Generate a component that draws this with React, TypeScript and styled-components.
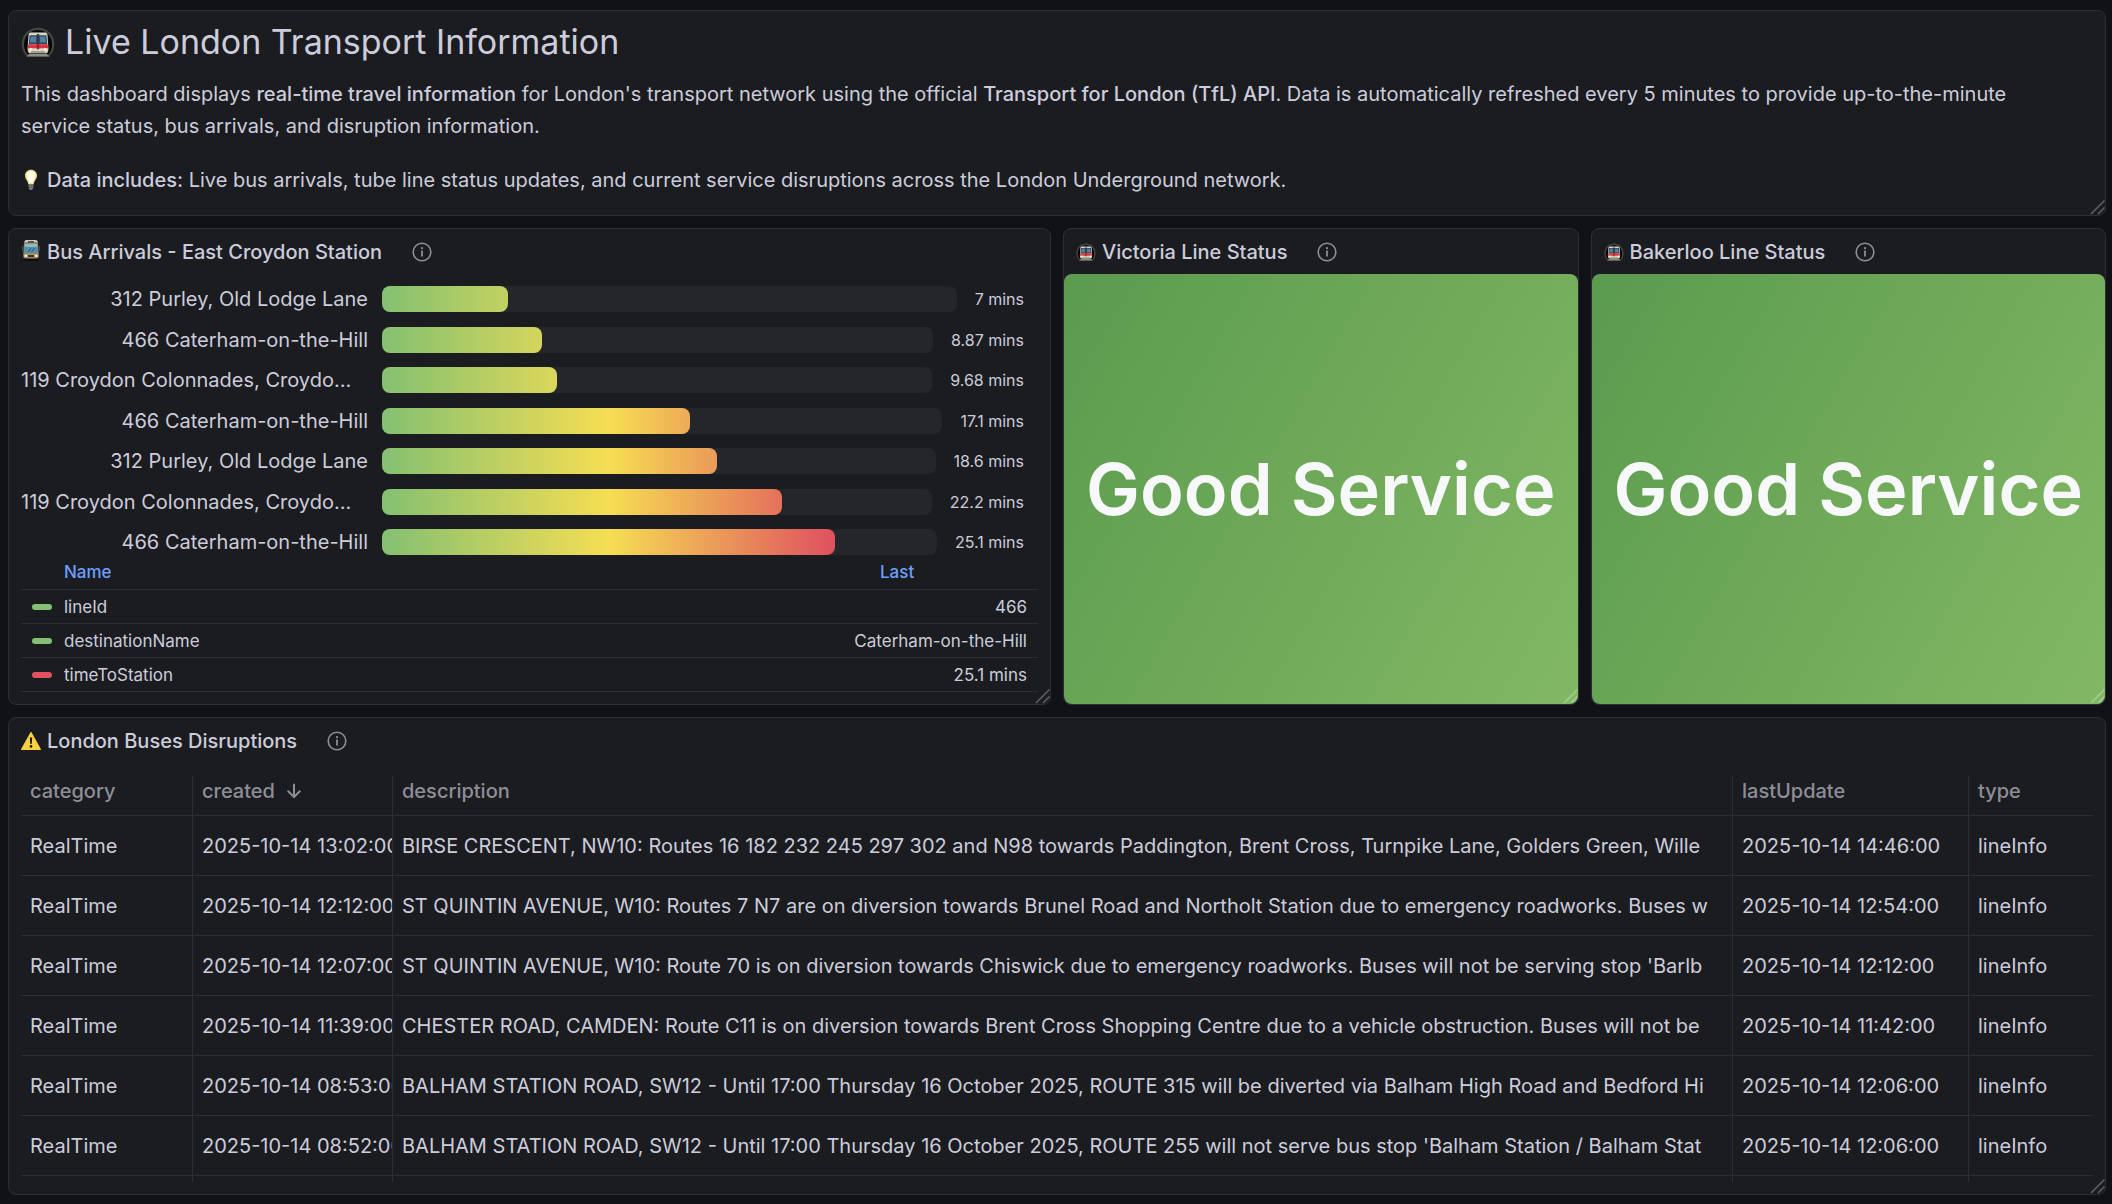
import React from "react";
import styled, { createGlobalStyle } from "styled-components";

const color = {
  canvas: "#111217",
  panel: "#1b1c20",
  line: "#2d2e33",
  track: "#25262b",
  text: "#ccccdc",
  muted: "#8e8e99",
  link: "#6e9fff",
  green: "#84c071",
  yellow: "#f5de53",
  red: "#e0525f",
};

const GlobalStyle = createGlobalStyle`
  *, *::before, *::after { box-sizing: border-box; }
  body {
    margin: 0;
    background: ${color.canvas};
    color: ${color.text};
    font-family: Inter, "Liberation Sans", sans-serif;
    font-size: 20px;
    line-height: 32px;
  }
`;

/* ---------- layout ---------- */

const Dashboard = styled.main`
  display: grid;
  grid-template-columns: repeat(4, minmax(0, 1fr));
  gap: 12px;
  padding: 10px 6px 9px 8px;
`;

const PanelFrame = styled.section<{ $span: number; $minHeight?: number }>`
  position: relative;
  display: flex;
  flex-direction: column;
  grid-column: span ${(p) => p.$span};
  min-height: ${(p) => (p.$minHeight ? `${p.$minHeight}px` : "0")};
  background: ${color.panel};
  border: 1px solid ${color.line};
  border-radius: 8px;
`;

const PanelHeader = styled.header`
  display: flex;
  align-items: center;
  gap: 6px;
  height: 45px;
  padding: 0 12px;
`;

const PanelTitle = styled.h2`
  margin: 0 24px 0 0;
  font-size: 20px;
  font-weight: 500;
  line-height: 32px;
  white-space: nowrap;
`;

const InfoButton = styled.button`
  display: flex;
  padding: 0;
  border: 0;
  background: none;
  color: ${color.muted};
  cursor: pointer;
`;

const Handle = styled.svg<{ $light?: boolean }>`
  position: absolute;
  right: 0;
  bottom: 0;
  color: ${(p) => (p.$light ? "rgba(220, 225, 215, 0.45)" : "#606167")};
`;

/* ---------- intro ---------- */

const Intro = styled.div`
  display: flex;
  flex-direction: column;
  padding: 11px 12px 19px;
`;

const IntroTitle = styled.h1`
  display: flex;
  align-items: center;
  gap: 10px;
  margin: 0 0 16px;
  font-size: 34px;
  font-weight: 400;
  line-height: 40px;
`;

const Paragraph = styled.p`
  margin: 0 0 22px;
  &:last-child { margin-bottom: 0; }
`;

const IconParagraph = styled(Paragraph)`
  display: flex;
  align-items: center;
  gap: 6px;
`;

const Strong = styled.strong`
  font-weight: 500;
`;

/* ---------- bar gauge ---------- */

const GaugeBody = styled.div`
  display: flex;
  flex: 1;
  flex-direction: column;
  padding: 12px;
`;

const Bars = styled.div`
  display: flex;
  flex: 1;
  flex-direction: column;
  justify-content: space-between;
`;

const BarRow = styled.div`
  display: grid;
  grid-template-columns: 347px minmax(0, 1fr);
  column-gap: 14px;
  align-items: center;
  height: 26px;
`;

const BarLabel = styled.span<{ $truncated: boolean }>`
  overflow: hidden;
  text-align: ${(p) => (p.$truncated ? "left" : "right")};
  white-space: nowrap;
  line-height: 26px;
`;

const BarArea = styled.div`
  display: grid;
  grid-template-columns: minmax(0, 1fr);
  > * { grid-area: 1 / 1; }
`;

const TrackLine = styled.div`
  display: flex;
  align-items: center;
  gap: 18px;
  padding-right: 14px;
`;

const Track = styled.div`
  flex: 1;
  height: 26px;
  border-radius: 8px;
  background: ${color.track};
`;

const BarValue = styled.span`
  font-size: 16px;
  line-height: 26px;
  white-space: nowrap;
`;

const Fill = styled.div`
  height: 26px;
  border-radius: 8px;
  background-image: linear-gradient(
    90deg,
    ${color.green} 0,
    ${color.yellow} 42%,
    ${color.red} 83%
  );
  background-repeat: no-repeat;
`;

const Legend = styled.table`
  width: 100%;
  border-collapse: collapse;
  font-size: 17px;
  line-height: 24px;
  th, td {
    height: 34px;
    padding: 0 11px;
    border-bottom: 1px solid ${color.line};
    font-weight: 400;
    text-align: left;
  }
  td:last-child { width: 202px; text-align: right; }
`;

const LegendHead = styled.th<{ $indent: number }>`
  && {
    padding-left: ${(p) => p.$indent}px;
    color: ${color.link};
    font-weight: 500;
  }
`;

const SeriesName = styled.span`
  display: flex;
  align-items: center;
  gap: 12px;
`;

const Swatch = styled.span<{ $color: string }>`
  width: 20px;
  height: 6px;
  border-radius: 3px;
  background: ${(p) => p.$color};
`;

/* ---------- status ---------- */

const StatusValue = styled.div`
  display: flex;
  flex: 1;
  align-items: center;
  justify-content: center;
  border-radius: 8px;
  background: linear-gradient(120deg, #5b9b4e, #82b864);
  color: #f7f8fa;
  font-size: 72px;
  font-weight: 600;
  line-height: 88px;
  white-space: nowrap;
`;

/* ---------- data table ---------- */

const TableBody = styled.div`
  padding: 13px 12px 12px;
`;

const DataTable = styled.table`
  width: 100%;
  table-layout: fixed;
  border-collapse: separate;
  border-spacing: 0;
`;

const Col = styled.col<{ $width?: number }>`
  width: ${(p) => (p.$width ? `${p.$width}px` : "auto")};
`;

const HeadCell = styled.th`
  height: 40px;
  padding: 0 0 0 9px;
  border-right: 1px solid ${color.line};
  border-bottom: 1px solid ${color.line};
  text-align: left;
  vertical-align: top;
  &:last-child { border-right: 0; }
`;

const SortButton = styled.button`
  display: flex;
  align-items: center;
  gap: 8px;
  padding: 0;
  border: 0;
  background: none;
  color: ${color.muted};
  font: inherit;
  font-weight: 500;
  line-height: 30px;
  cursor: pointer;
`;

const Cell = styled.td`
  height: 60px;
  padding: 0 0 0 9px;
  overflow: hidden;
  border-right: 1px solid ${color.line};
  border-bottom: 1px solid ${color.line};
  white-space: nowrap;
  &:last-child { border-right: 0; }
`;

const TailCell = styled(Cell)`
  height: 6px;
  border-bottom: 0;
`;

/* ---------- icons ---------- */

const InfoIcon = () => (
  <svg width="20" height="20" viewBox="0 0 20 20" fill="none" aria-hidden="true">
    <circle cx="10" cy="10" r="8.8" stroke="currentColor" strokeWidth="1.6" />
    <path d="M10 9.2v4.6" stroke="currentColor" strokeWidth="1.8" strokeLinecap="round" />
    <circle cx="10" cy="6.2" r="1.1" fill="currentColor" />
  </svg>
);

const SortDownIcon = () => (
  <svg width="22" height="22" viewBox="0 0 22 22" fill="none" aria-hidden="true">
    <path
      d="M11 4.600v12M5.200 11.200l5.800 5.800 5.800-5.800"
      stroke="currentColor"
      strokeWidth="2"
      strokeLinecap="round"
      strokeLinejoin="round"
    />
  </svg>
);

const ResizeHandle = ({ light }: { light?: boolean }) => (
  <Handle $light={light} width="15" height="15" viewBox="0 0 15 15" fill="none" aria-hidden="true">
    <path d="M1 14L14.500 .5M8 14l6.500-6.500" stroke="currentColor" strokeWidth="1.5" />
  </Handle>
);

const MetroIcon = ({ width }: { width: number }) => (
  <svg width={width} height={Math.round((width * 30) / 34)} viewBox="0 0 34 30" aria-hidden="true">
    <path d="M6 29.500C2.600 26.500.7 22 .7 16.800.7 7.800 8 .7 17 .7s16.300 7.100 16.300 16.100c0 5.200-1.900 9.700-5.300 12.700z" fill="#464745" />
    <path d="M7 28C4.300 25.300 3 21.400 3 17 3 9 9.200 3 17 3s14 6 14 14c0 4.400-1.300 8.300-4 11z" fill="#070807" />
    <path d="M5.500 29.600l3-3h17l3 3z" fill="#8b8c88" />
    <path d="M9.500 5.500h15q1.600 0 2 2.400l.9 13.600q0 4.500-2.200 4.500H8.800q-2.200 0-2.200-4.500L7.500 7.900q.4-2.400 2-2.400z" fill="#d9d6c5" />
    <path d="M8.600 8.200h16.800l.8 9H7.800z" fill="#2b4a63" />
    <path d="M9.600 9.500h5.600v6H9zM18.800 9.500h5.600l.6 6h-6.200z" fill="#547f9f" />
    <path d="M15.800 7h2.400v11h-2.400z" fill="#323b45" />
    <path d="M7.300 17.200h19.400l.4 4H6.900z" fill="#dc3440" />
    <path d="M15.800 17.200h2.400v5h-2.400z" fill="#9b222d" />
    <circle cx="9.800" cy="22.300" r="1.300" fill="#fff7cf" />
    <circle cx="24.200" cy="22.300" r="1.300" fill="#fff7cf" />
    <path d="M10 24h14v2H10z" fill="#a39f91" />
  </svg>
);

const TramIcon = () => (
  <svg width="20" height="24" viewBox="0 0 20 24" aria-hidden="true">
    <path d="M3 18h14l.5 3h-15z" fill="#0d0e10" />
    <path d="M5.500 0h9q2 0 2.500 2.500l.8 13q0 3-2 3H4.200q-2 0-2-3L3 2.500Q3.500 0 5.500 0z" fill="#8d8c78" />
    <path d="M5.500 0h9q1.600 0 2.200 2H3.300q.6-2 2.200-2z" fill="#cfcbb4" />
    <path d="M7 1h6v2H7z" fill="#5a584a" />
    <path d="M4 4h12l.6 9.500H3.400z" fill="#568fa9" />
    <path d="M4 4h12l.2 3H3.800z" fill="#8cb9c6" />
    <path d="M7 12l3-4M10.500 12l3-4" stroke="#31566a" />
    <path d="M1 6h1.500v5H1zM17.500 6H19v5h-1.500z" fill="#44463f" />
    <path d="M3.200 14.500h13.600l.2 2.500H3z" fill="#e59b42" />
    <path d="M7 15h6v2H7z" fill="#4a3422" />
    <circle cx="4.800" cy="15.800" r="1.200" fill="#fff3cb" />
    <circle cx="15.200" cy="15.800" r="1.200" fill="#fff3cb" />
  </svg>
);

const WarningIcon = () => (
  <svg width="20" height="20" viewBox="0 0 20 20" aria-hidden="true">
    <path d="M10 1.600L19.300 18.400H.7z" fill="#fbd043" stroke="#fbd043" strokeWidth="1.2" strokeLinejoin="round" />
    <path d="M8.800 6.600h2.400l-.5 6.400H9.300z" fill="#1d1a0c" />
    <circle cx="10" cy="15.400" r="1.300" fill="#1d1a0c" />
  </svg>
);

const BulbIcon = () => (
  <svg width="20" height="22" viewBox="0 0 20 22" aria-hidden="true">
    <path d="M10 .8c3.500 0 6 2.500 6 5.800 0 3.400-2.600 4.700-3.300 8.600H7.300C6.600 11.300 4 10 4 6.600 4 3.300 6.500.8 10 .8z" fill="#f7dc86" />
    <path d="M10 2.200c2.500 0 4.300 1.900 4.300 4.300 0 2.600-2 4.500-2.700 7.500H8.400c-.7-3-2.700-4.900-2.700-7.500 0-2.400 1.800-4.300 4.300-4.300z" fill="#fffdf2" />
    <path d="M7.500 15.200h5l-.4 4-1.100 1.600H9l-1.100-1.600z" fill="#8b8c8f" />
    <path d="M7.600 16.800h4.800M7.800 18.600h4.400" stroke="#4d4e52" strokeWidth=".8" />
  </svg>
);

/* ---------- data ---------- */

const SCALE_MAX = 30;
const VALUE_GUTTER = 115;

const PURLEY = "312 Purley, Old Lodge Lane";
const CATERHAM = "466 Caterham-on-the-Hill";
const COLONNADES = "119 Croydon Colonnades, Croydo…";

const arrivals = [
  { label: PURLEY, mins: 7 },
  { label: CATERHAM, mins: 8.87 },
  { label: COLONNADES, mins: 9.68 },
  { label: CATERHAM, mins: 17.1 },
  { label: PURLEY, mins: 18.6 },
  { label: COLONNADES, mins: 22.2 },
  { label: CATERHAM, mins: 25.1 },
];

const series = [
  { name: "lineId", last: "466", color: color.green },
  { name: "destinationName", last: "Caterham-on-the-Hill", color: color.green },
  { name: "timeToStation", last: "25.1 mins", color: color.red },
];

const columns = [
  { name: "category", width: 172 },
  { name: "created", width: 200, sorted: true },
  { name: "description" },
  { name: "lastUpdate", width: 236 },
  { name: "type", width: 124 },
];

const disruptions = [
  ["2025-10-14 13:02:00", "BIRSE CRESCENT, NW10: Routes 16 182 232 245 297 302 and N98 towards Paddington, Brent Cross, Turnpike Lane, Golders Green, Wille", "2025-10-14 14:46:00"],
  ["2025-10-14 12:12:00", "ST QUINTIN AVENUE, W10: Routes 7 N7 are on diversion towards Brunel Road and Northolt Station due to emergency roadworks. Buses w", "2025-10-14 12:54:00"],
  ["2025-10-14 12:07:00", "ST QUINTIN AVENUE, W10: Route 70 is on diversion towards Chiswick due to emergency roadworks. Buses will not be serving stop 'Barlb", "2025-10-14 12:12:00"],
  ["2025-10-14 11:39:00", "CHESTER ROAD, CAMDEN: Route C11 is on diversion towards Brent Cross Shopping Centre due to a vehicle obstruction. Buses will not be", "2025-10-14 11:42:00"],
  ["2025-10-14 08:53:00", "BALHAM STATION ROAD, SW12 - Until 17:00 Thursday 16 October 2025, ROUTE 315 will be diverted via Balham High Road and Bedford Hi", "2025-10-14 12:06:00"],
  ["2025-10-14 08:52:00", "BALHAM STATION ROAD, SW12 - Until 17:00 Thursday 16 October 2025, ROUTE 255 will not serve bus stop 'Balham Station / Balham Stat", "2025-10-14 12:06:00"],
];

/* ---------- panels ---------- */

type PanelProps = {
  title: string;
  icon: React.ReactNode;
  span: number;
  minHeight?: number;
  lightHandle?: boolean;
  children: React.ReactNode;
};

const Panel = ({ title, icon, span, minHeight, lightHandle, children }: PanelProps) => (
  <PanelFrame $span={span} $minHeight={minHeight}>
    <PanelHeader>
      {icon}
      <PanelTitle>{title}</PanelTitle>
      <InfoButton type="button" aria-label={`About ${title}`}>
        <InfoIcon />
      </InfoButton>
    </PanelHeader>
    {children}
    <ResizeHandle light={lightHandle} />
  </PanelFrame>
);

const Bar = ({ label, mins }: { label: string; mins: number }) => (
  <BarRow>
    <BarLabel $truncated={label.endsWith("…")}>{label}</BarLabel>
    <BarArea>
      <TrackLine>
        <Track />
        <BarValue>{mins} mins</BarValue>
      </TrackLine>
      <Fill
        style={{
          width: `calc((100% - ${VALUE_GUTTER}px) * ${mins / SCALE_MAX})`,
          backgroundSize: `${(SCALE_MAX / mins) * 100}% 100%`,
        }}
      />
    </BarArea>
  </BarRow>
);

export default function App() {
  return (
    <>
      <GlobalStyle />
      <Dashboard>
        <PanelFrame $span={4}>
          <Intro>
            <IntroTitle>
              <MetroIcon width={34} />
              Live London Transport Information
            </IntroTitle>
            <Paragraph>
              This dashboard displays <Strong>real-time travel information</Strong> for London's
              transport network using the official{" "}
              <Strong>Transport for London (TfL) API</Strong>. Data is automatically refreshed every
              5 minutes to provide up-to-the-minute
              <br />
              service status, bus arrivals, and disruption information.
            </Paragraph>
            <IconParagraph>
              <BulbIcon />
              <span>
                <Strong>Data includes:</Strong> Live bus arrivals, tube line status updates, and
                current service disruptions across the London Underground network.
              </span>
            </IconParagraph>
          </Intro>
          <ResizeHandle />
        </PanelFrame>

        <Panel title="Bus Arrivals - East Croydon Station" icon={<TramIcon />} span={2} minHeight={477}>
          <GaugeBody>
            <Bars>
              {arrivals.map((a) => (
                <Bar key={a.mins} label={a.label} mins={a.mins} />
              ))}
            </Bars>
            <Legend>
              <thead>
                <tr>
                  <LegendHead $indent={43}>Name</LegendHead>
                  <LegendHead $indent={44}>Last</LegendHead>
                </tr>
              </thead>
              <tbody>
                {series.map((s) => (
                  <tr key={s.name}>
                    <td>
                      <SeriesName>
                        <Swatch $color={s.color} />
                        {s.name}
                      </SeriesName>
                    </td>
                    <td>{s.last}</td>
                  </tr>
                ))}
              </tbody>
            </Legend>
          </GaugeBody>
        </Panel>

        {["Victoria Line Status", "Bakerloo Line Status"].map((title) => (
          <Panel key={title} title={title} icon={<MetroIcon width={20} />} span={1} lightHandle>
            <StatusValue>Good Service</StatusValue>
          </Panel>
        ))}

        <Panel title="London Buses Disruptions" icon={<WarningIcon />} span={4}>
          <TableBody>
            <DataTable>
              <colgroup>
                {columns.map((c) => (
                  <Col key={c.name} $width={c.width} />
                ))}
              </colgroup>
              <thead>
                <tr>
                  {columns.map((c) => (
                    <HeadCell key={c.name} scope="col">
                      <SortButton type="button">
                        {c.name}
                        {c.sorted && <SortDownIcon />}
                      </SortButton>
                    </HeadCell>
                  ))}
                </tr>
              </thead>
              <tbody>
                {disruptions.map(([created, description, lastUpdate]) => (
                  <tr key={created}>
                    <Cell>RealTime</Cell>
                    <Cell>{created}</Cell>
                    <Cell>{description}</Cell>
                    <Cell>{lastUpdate}</Cell>
                    <Cell>lineInfo</Cell>
                  </tr>
                ))}
                <tr aria-hidden="true">
                  {columns.map((c) => (
                    <TailCell key={c.name} />
                  ))}
                </tr>
              </tbody>
            </DataTable>
          </TableBody>
        </Panel>
      </Dashboard>
    </>
  );
}
